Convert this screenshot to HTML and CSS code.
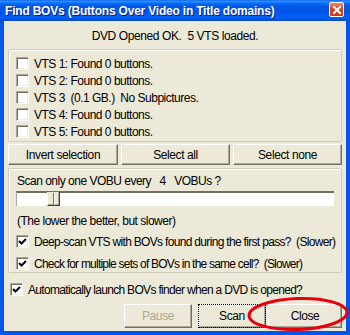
FILE: index.html
```html
<!DOCTYPE html>
<html lang="en">
<head>
  <meta charset="UTF-8" />
  <title>Find BOVs</title>
  <link rel="stylesheet" href="styles.css">
</head>
<body>
  <div class="window">
    <div class="titlebar">
      <span class="title">Find BOVs (Buttons Over Video in Title domains)</span>
      <span class="close-box">
        <svg width="12" height="12" viewBox="0 0 12 12"><path d="M3 3 L9 9 M9 3 L3 9" stroke="#fff" stroke-width="2" stroke-linecap="square"/></svg>
      </span>
    </div>

    <div class="client">
      <div class="status">DVD Opened OK.  5 VTS loaded.</div>

      <div class="group vts-list">
        <div class="check-row"><span class="cb"></span><span class="lbl">VTS 1: Found 0 buttons.</span></div>
        <div class="check-row"><span class="cb"></span><span class="lbl">VTS 2: Found 0 buttons.</span></div>
        <div class="check-row"><span class="cb"></span><span class="lbl">VTS 3  (0.1 GB.)  No Subpictures.</span></div>
        <div class="check-row"><span class="cb"></span><span class="lbl">VTS 4: Found 0 buttons.</span></div>
        <div class="check-row"><span class="cb"></span><span class="lbl">VTS 5: Found 0 buttons.</span></div>
      </div>

      <div class="select-buttons">
        <span class="btn">Invert selection</span>
        <span class="btn">Select all</span>
        <span class="btn">Select none</span>
      </div>

      <div class="group options">
        <div class="text-line">Scan only one VOBU every   4   VOBUs ?</div>
        <div class="slider"><span class="thumb"></span></div>
        <div class="text-line lower">(The lower the better, but slower)</div>
        <div class="check-row first-opt">
          <span class="cb"><svg width="9" height="9" viewBox="0 0 9 9"><path d="M1 4 L3.5 6.5 L8 2" fill="none" stroke="#000" stroke-width="2"/></svg></span>
          <span class="lbl tight">Deep-scan VTS with BOVs found during the first pass?  (Slower)</span>
        </div>
        <div class="check-row next-opt">
          <span class="cb"><svg width="9" height="9" viewBox="0 0 9 9"><path d="M1 4 L3.5 6.5 L8 2" fill="none" stroke="#000" stroke-width="2"/></svg></span>
          <span class="lbl tighter">Check for multiple sets of BOVs in the same cell?  (Slower)</span>
        </div>
      </div>

      <div class="check-row auto-launch">
        <span class="cb"><svg width="9" height="9" viewBox="0 0 9 9"><path d="M1 4 L3.5 6.5 L8 2" fill="none" stroke="#000" stroke-width="2"/></svg></span>
        <span class="lbl tight">Automatically launch BOVs finder when a DVD is opened?</span>
      </div>

      <div class="bottom-buttons">
        <span class="btn pause">Pause</span>
        <span class="btn scan">Scan</span>
        <span class="btn close">Close</span>
      </div>
    </div>

    <!-- red marker drawn over the Close button -->
    <svg class="marker" width="110" height="40" viewBox="0 0 110 40">
      <ellipse cx="55" cy="20" rx="49" ry="15.5" fill="none" stroke="#e8000c" stroke-width="3" transform="rotate(-2 55 20)"/>
    </svg>
  </div>
</body>
</html>
```

FILE: styles.css
```css
body {
  margin: 0;
  font-family: 'Liberation Sans', Arial, sans-serif;
  font-size: 12px;
  color: #000;
  background: #fff;
}

.window {
  position: relative;
  width: 350px;
  height: 335px;
  box-sizing: border-box;
  background: #0055ea;
  display: flex;
  flex-direction: column;
  overflow: hidden;
}

.titlebar {
  height: 21px;
  flex: none;
  display: flex;
  align-items: center;
  justify-content: space-between;
  padding: 0 6px 0 5px;
  background: linear-gradient(to bottom, #0058ee 0%, #3593ff 5%, #1b84ff 10%, #0466f5 18%, #0057e5 30%, #0055eb 60%, #005bf5 72%, #0260f2 85%, #0050d6 95%, #0045c0 100%);
}

.title {
  color: #fff;
  font-weight: bold;
  font-size: 12px;
  letter-spacing: -0.2px;
  padding-top: 1px;
  text-shadow: 1px 1px 0 #0a1e80;
  white-space: nowrap;
}

.close-box {
  width: 13px;
  height: 13px;
  border: 1px solid #fff;
  border-radius: 2px;
  background: linear-gradient(to bottom, #e98a6a, #d9431e 45%, #c93a12);
  display: flex;
  align-items: center;
  justify-content: center;
  margin-top: -2px;
}

.client {
  flex: 1;
  margin: 0 4px 4px 4px;
  padding: 0 4px;
  background: #ece9d8;
  display: flex;
  flex-direction: column;
}

.status {
  height: 20px;
  padding-top: 8px;
  line-height: 14px;
  text-align: center;
  white-space: pre;
  letter-spacing: -0.4px;
}

.group {
  border: 1px solid #cfccbc;
  box-shadow: inset 1px 1px 0 #fff;
  border-radius: 2px;
}

.vts-list {
  padding: 5px 7px 1px;
}

.check-row {
  height: 17px;
  display: flex;
  align-items: center;
  gap: 5px;
}

.lbl {
  white-space: pre;
  letter-spacing: -0.5px;
}

.lbl.tight {
  letter-spacing: -0.68px;
}

.lbl.tighter {
  letter-spacing: -0.78px;
}

.cb {
  width: 11px;
  height: 11px;
  flex: none;
  background: #fff;
  border-top: 1px solid #aca899;
  border-left: 1px solid #aca899;
  border-right: 1px solid #fff;
  border-bottom: 1px solid #fff;
  box-shadow: inset 1px 1px 0 #716f64, inset -1px -1px 0 #f1efe2;
  display: flex;
  align-items: center;
  justify-content: center;
}

.select-buttons {
  margin-top: 2px;
  display: grid;
  grid-template-columns: 110px 109px 109px;
  gap: 3px;
  justify-content: space-between;
}

.btn {
  height: 21px;
  box-sizing: border-box;
  display: flex;
  align-items: center;
  justify-content: center;
  background: #ece9d8;
  border-top: 1px solid #fff;
  border-left: 1px solid #fff;
  border-right: 1px solid #716f64;
  border-bottom: 1px solid #716f64;
  box-shadow: inset -1px -1px 0 #aca899;
  letter-spacing: -0.4px;
}

.options {
  margin-top: 3px;
  padding: 5px 7px 0;
}

.text-line {
  height: 14px;
  line-height: 14px;
  padding-left: 1px;
  white-space: pre;
  letter-spacing: -0.5px;
}

.slider {
  position: relative;
  margin: 3px 0 0;
  height: 13px;
  background: #fff;
  border-top: 2px solid #716f64;
  border-left: 1px solid #aca899;
}

.thumb {
  position: absolute;
  left: 30px;
  top: -1px;
  width: 11px;
  height: 13px;
  background: #ece9d8;
  border-left: 1px solid #fff;
  border-right: 1px solid #404040;
  border-bottom: 1px solid #404040;
  box-shadow: inset -1px -1px 0 #aca899;
}

.thumb::after {
  content: "";
  position: absolute;
  left: 5px;
  top: 1px;
  width: 1px;
  height: 12px;
  background: #716f64;
  box-shadow: 1px 0 0 #fff;
}

.lower {
  margin-top: 8px;
}

.first-opt {
  margin-top: 5px;
}

.next-opt {
  margin-top: 5px;
}

.auto-launch {
  margin: 8px 0 0 2px;
}

.bottom-buttons {
  margin-top: 6px;
  display: flex;
  justify-content: flex-end;
}

.bottom-buttons .btn {
  height: 24px;
}

.pause {
  width: 68px;
  color: #aca899;
}

.scan {
  width: 68px;
  margin-left: 6px;
  outline: 1px dotted #000;
  outline-offset: -1px;
}

.close {
  width: 74px;
  margin-left: 2px;
}

.marker {
  position: absolute;
  left: 243px;
  top: 294px;
}
```
